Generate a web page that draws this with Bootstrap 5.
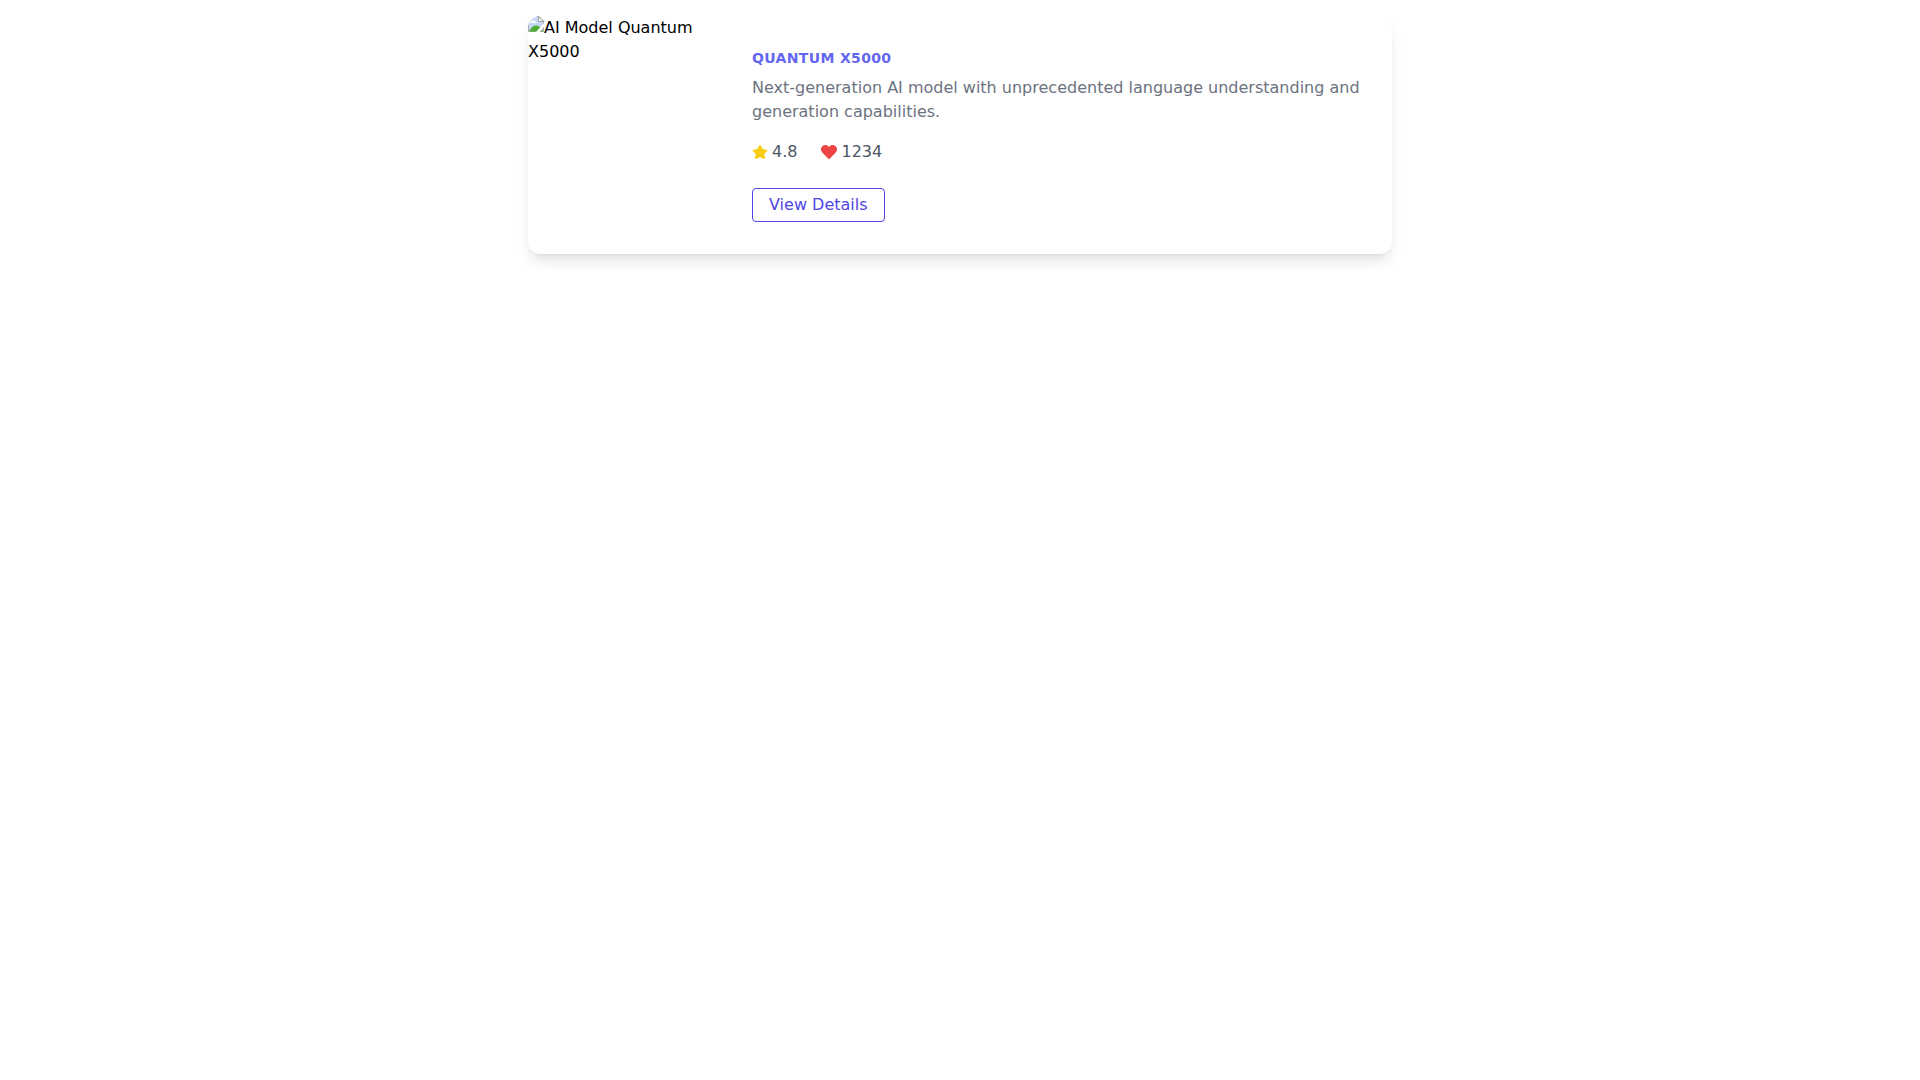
<!DOCTYPE html>
<html lang="en">
<head>
<meta charset="utf-8">
<meta name="viewport" content="width=device-width, initial-scale=1">
<title>Quantum X5000</title>
<link href="https://cdn.jsdelivr.net/npm/bootstrap@5.3.0/dist/css/bootstrap.min.css" rel="stylesheet">
<style>
  body { font-family: "DejaVu Sans", sans-serif; color: #000; }
  .page-wrap { max-width: 896px; }
  .model-card { border-radius: 12px; box-shadow: 0 10px 15px -3px rgba(0,0,0,.1), 0 4px 6px -4px rgba(0,0,0,.1); }
  .model-media { width: 192px; }
  .missing-icon { width: 16px; height: 16px; vertical-align: top; }
  .model-name { font-size: 14px; line-height: 20px; font-weight: 600; letter-spacing: .025em; color: #6366f1; }
  .model-text { color: #6b7280; }
  .model-stats { color: #4b5563; }
  .stat-icon { width: 16px; height: 16px; }
  .star { color: #facc15; }
  .heart { color: #ef4444; }
  .btn-details {
    --bs-btn-padding-x: 16px; --bs-btn-padding-y: 4px; --bs-btn-border-radius: 4px;
    --bs-btn-color: #4f46e5; --bs-btn-border-color: #4f46e5;
    --bs-btn-hover-color: #fff; --bs-btn-hover-bg: #4f46e5; --bs-btn-hover-border-color: #4f46e5;
    --bs-btn-active-color: #fff; --bs-btn-active-bg: #4338ca; --bs-btn-active-border-color: #4338ca;
    transition: none;
  }
</style>
</head>
<body>
<main class="page-wrap mx-auto p-3">
  <article class="model-card bg-white overflow-hidden d-md-flex">
    <div class="model-media flex-shrink-0"><svg class="missing-icon" viewBox="0 0 16 16" aria-hidden="true">
        <path d="M.5.5H11l4.500 4.500v10.500H.5z" fill="#c5d7f7" stroke="#a9a9a9"/>
        <path d="M2 7c0-1.300 1-2 2-1.800.5-1.200 2.600-1.200 3 .2 1.200 0 1.600 1 1.300 1.600z" fill="#fff"/>
        <path d="M1 15.500C3.500 10.500 6 9.500 8 9.500s5 1.500 7 6z" fill="#4caf34"/>
        <path d="M10.500.5V5.500h5z" fill="#fff" stroke="#a3a3a3"/>
        <path d="M16 7v3.500L12 16H8z" fill="#fff"/>
      </svg>AI Model Quantum X5000</div>
    <div class="p-4 p-md-0 m-md-4 flex-grow-1">
      <div class="p-md-2">
        <h1 class="model-name text-uppercase mb-0">Quantum X5000</h1>
        <p class="model-text mt-2 mb-0">Next-generation AI model with unprecedented language understanding and generation capabilities.</p>
        <div class="model-stats d-flex gap-4 mt-3">
          <div class="d-flex align-items-center gap-1">
            <svg class="stat-icon star" viewBox="0 0 576 512" fill="currentColor" aria-hidden="true"><path d="M259.3 17.8L194 150.2 47.9 171.5c-26.2 3.8-36.7 36.1-17.7 54.6l105.700 103-25 145.500c-4.500 26.300 23.200 46 46.400 33.700L288 439.600l130.700 68.700c23.200 12.200 50.900-7.400 46.400-33.700l-25-145.500 105.700-103c19-18.500 8.500-50.800-17.700-54.600L382 150.200 316.700 17.800c-11.700-23.600-45.600-23.900-57.400 0z"/></svg>
            <span>4.8</span>
          </div>
          <div class="d-flex align-items-center gap-1">
            <svg class="stat-icon heart" viewBox="0 0 512 512" fill="currentColor" aria-hidden="true"><path d="M462.3 62.6C407.5 15.9 326 24.3 275.7 76.2L256 96.5l-19.7-20.3C186.1 24.3 104.5 15.9 49.7 62.6c-62.8 53.6-66.1 149.8-9.9 207.9l193.5 199.8c12.5 12.9 32.8 12.9 45.3 0l193.5-199.8c56.3-58.1 53-154.3-9.8-207.9z"/></svg>
            <span>1234</span>
          </div>
        </div>
        <button type="button" class="btn btn-details mt-4">View Details</button>
      </div>
    </div>
  </article>
</main>
<script src="https://cdn.jsdelivr.net/npm/bootstrap@5.3.0/dist/js/bootstrap.bundle.min.js"></script>
</body>
</html>
